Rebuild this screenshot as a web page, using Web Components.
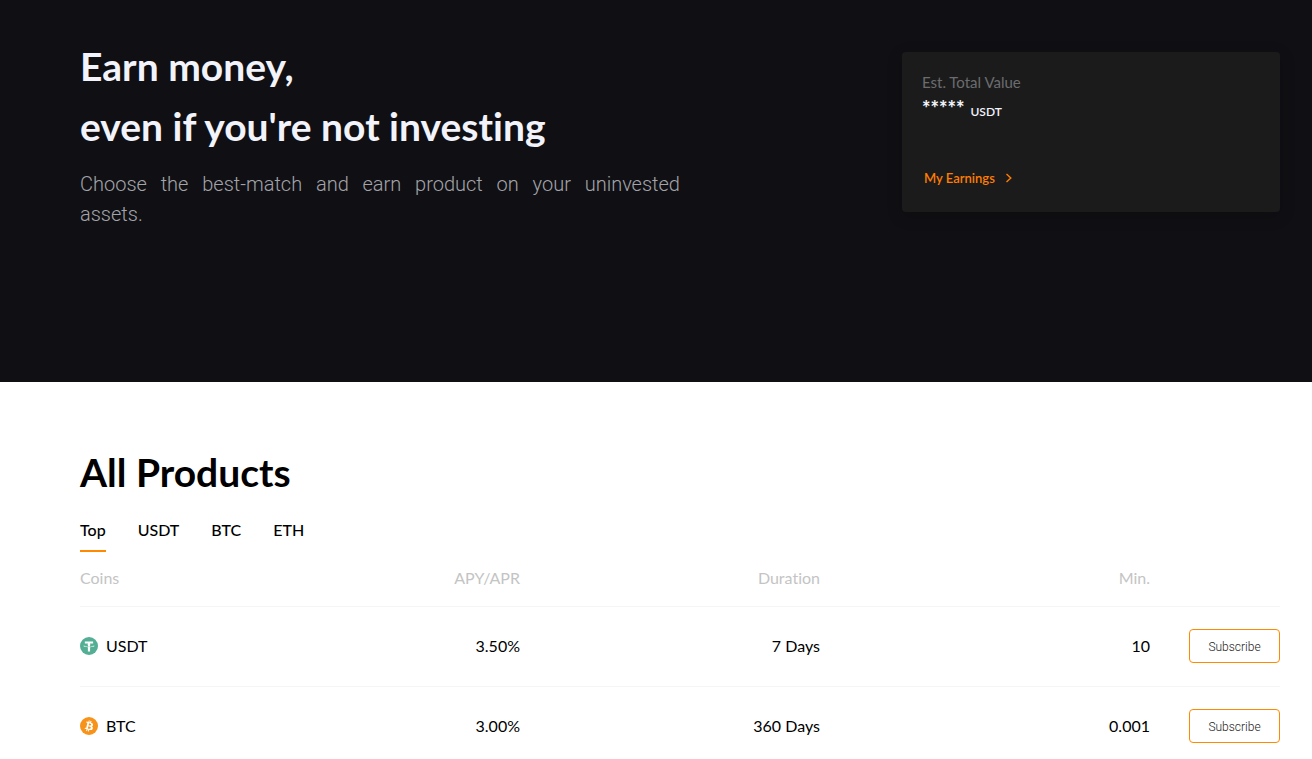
<!DOCTYPE html>
<html lang="en">
<head>
<meta charset="utf-8">
<title>Earn</title>
<style>
  body { margin: 0; background: #fff; color: #000; font: 400 16px/24px Lato, Roboto, sans-serif; font-variant-ligatures: none; }
</style>
</head>
<body>
<earn-hero>
  <span slot="title">Earn money,<br>even if you're not investing</span>
  <span slot="lead">Choose the best-match and earn product on your uninvested</span>
  <span slot="rest">assets.</span>
  <total-value-card slot="card" amount="*****" unit="USDT"></total-value-card>
</earn-hero>
<product-section>
  <span slot="title">All Products</span>
  <product-tabs slot="tabs" items="Top,USDT,BTC,ETH"></product-tabs>
  <product-table slot="table"></product-table>
</product-section>

<script>
class Base extends HTMLElement {
  connectedCallback() {
    if (!this.shadowRoot) this.attachShadow({ mode: 'open' }).innerHTML = this.render();
    this.ready();
  }
  ready() {}
}

customElements.define('earn-hero', class extends Base {
  render() {
    return `<style>
      :host { display: block; background: #101014; color: #f2f3fb; }
      header { display: flex; justify-content: space-between; align-items: flex-start; gap: 32px; min-height: 346px; padding: 36px 32px 0 80px; }
      .copy { flex: 0 1 600px; }
      h1 { margin: 0; font-size: 39px; line-height: 60px; font-weight: 700; }
      p { margin: 13px 0 0; font: 300 20px/30px Roboto, sans-serif; color: #a3a4aa; }
      ::slotted([slot=lead]) { display: block; text-align: justify; text-align-last: justify; }
      slot[name=card] { display: block; flex: 0 1 378px; margin-top: 16px; }
    </style>
    <header>
      <div class="copy">
        <h1><slot name="title"></slot></h1>
        <p><slot name="lead"></slot> <slot name="rest"></slot></p>
      </div>
      <slot name="card"></slot>
    </header>`;
  }
});

customElements.define('total-value-card', class extends Base {
  render() {
    return `<style>
      :host { display: block; background: #1b1b1b; border-radius: 4px; box-shadow: 0 4px 16px rgba(0, 0, 0, .2); }
      section { display: flex; flex-direction: column; padding: 18px 20px 24px; }
      .label { font-size: 15px; line-height: 24px; color: #6b6c70; }
      .value { display: flex; align-items: baseline; gap: 6px; line-height: 28px; color: #f2f3fb; }
      .amount { font-size: 20px; font-weight: 900; }
      .unit { font-size: 12px; font-weight: 600; }
      a { display: flex; align-items: center; gap: 10px; align-self: flex-start; margin-top: 42px; padding: 0 2px; font-size: 13px; line-height: 20px; font-weight: 600; color: #ff7d00; text-decoration: none; }
      svg { display: block; }
    </style>
    <section>
      <span class="label">Est. Total Value</span>
      <span class="value"><span class="amount">${this.getAttribute('amount')}</span><span class="unit">${this.getAttribute('unit')}</span></span>
      <a href="#earnings">My Earnings
        <svg width="8" height="10" viewBox="0 0 8 10" fill="none" stroke="currentColor" stroke-width="1.4" aria-hidden="true"><path d="M1.5 1 5.8 5 1.5 9"/></svg>
      </a>
    </section>`;
  }
});

customElements.define('product-section', class extends Base {
  render() {
    return `<style>
      :host { display: block; padding: 60px 32px 0 80px; }
      h2 { margin: 0 0 16px; font-size: 39px; line-height: 60px; font-weight: 700; }
    </style>
    <h2><slot name="title"></slot></h2>
    <slot name="tabs"></slot>
    <slot name="table"></slot>`;
  }
});

customElements.define('product-tabs', class extends Base {
  render() {
    return `<style>
      :host { display: block; }
      div { display: flex; gap: 32px; }
      button { margin: 0; padding: 0 0 8px; border: 0; border-bottom: 2px solid transparent; background: none; font: inherit; font-variant-ligatures: none; font-weight: 500; color: #000; cursor: pointer; }
      button[aria-selected=true] { border-color: #ff8a00; }
    </style>
    <div role="tablist" aria-label="Coins">${this.getAttribute('items').split(',').map((t, i) =>
      `<button type="button" role="tab" aria-selected="${i === 0}">${t}</button>`).join('')}</div>`;
  }
  ready() {
    const tabs = [...this.shadowRoot.querySelectorAll('button')];
    tabs.forEach(b => b.onclick = () => tabs.forEach(x => x.setAttribute('aria-selected', x === b)));
  }
});

customElements.define('coin-icon', class extends Base {
  render() {
    const coins = {
      USDT: ['#53ae94', 'M17.922 17.383v-.002c-.11.008-.677.042-1.942.042-1.01 0-1.721-.03-1.971-.042v.003c-3.888-.171-6.79-.848-6.79-1.658 0-.809 2.902-1.486 6.79-1.66v2.644c.254.018.982.061 1.988.061 1.207 0 1.812-.05 1.925-.06v-2.643c3.88.173 6.775.85 6.775 1.658 0 .81-2.895 1.485-6.775 1.657m0-3.59v-2.366h5.414V7.819H8.595v3.608h5.414v2.365c-4.4.202-7.709 1.074-7.709 2.118 0 1.044 3.309 1.915 7.709 2.118v7.582h3.913v-7.584c4.393-.202 7.694-1.073 7.694-2.116 0-1.043-3.301-1.914-7.694-2.117'],
      BTC: ['#f7931a', 'M23.189 14.02c.314-2.096-1.283-3.223-3.465-3.975l.708-2.84-1.728-.43-.69 2.765c-.454-.114-.92-.22-1.385-.326l.695-2.783L15.596 6l-.708 2.839c-.376-.086-.746-.17-1.104-.26l.002-.009-2.384-.595-.46 1.846s1.283.294 1.256.312c.7.175.826.638.805 1.006l-.806 3.235c.048.012.11.03.18.057l-.183-.045-1.13 4.532c-.086.212-.303.531-.793.41.018.025-1.256-.313-1.256-.313l-.858 1.978 2.25.561c.418.105.828.215 1.231.318l-.715 2.872 1.727.43.708-2.84c.472.127.93.245 1.378.357l-.706 2.828 1.728.43.715-2.866c2.948.558 5.164.333 6.097-2.333.752-2.146-.037-3.385-1.588-4.192 1.13-.26 1.98-1.003 2.207-2.538zm-3.95 5.538c-.533 2.147-4.148.986-5.32.695l.95-3.805c1.172.293 4.929.872 4.37 3.11zm.535-5.569c-.487 1.953-3.495.96-4.47.717l.86-3.45c.975.243 4.118.696 3.61 2.733z']
    };
    const [color, path] = coins[this.getAttribute('coin')];
    return `<style>:host { display: block; } svg { display: block; }</style>
    <svg width="18" height="18" viewBox="0 0 32 32" aria-hidden="true"><circle cx="16" cy="16" r="16" fill="${color}"/><path fill="#fff" d="${path}"/></svg>`;
  }
});

customElements.define('subscribe-button', class extends Base {
  render() {
    return `<style>
      :host { display: inline-block; vertical-align: middle; }
      button { display: block; width: 91px; height: 34px; margin: 0; padding: 2px 0 0; border: 1px solid #ff8a00; border-radius: 4px; background: #fff; font: 300 12px/20px Roboto, sans-serif; color: #222; cursor: pointer; }
    </style>
    <button type="button"><slot></slot></button>`;
  }
});

customElements.define('product-table', class extends Base {
  render() {
    const rows = [['USDT', '3.50%', '7 Days', '10'], ['BTC', '3.00%', '360 Days', '0.001']];
    return `<style>
      :host { display: block; }
      table { width: 100%; table-layout: fixed; border-collapse: separate; border-spacing: 0; }
      .half { width: 220px; } .term { width: 300px; } .min { width: 330px; } .act { width: 130px; }
      th, td { box-sizing: border-box; padding: 0 0 2px; text-align: right; font-weight: 400; border-bottom: 1px solid #f5f5f5; }
      thead :is(th, td) { height: 55px; color: #c4c4c4; }
      tbody td { height: 80px; }
      .name { text-align: left; }
      .coin { display: flex; align-items: center; gap: 8px; }
      tbody tr:last-child td { border-color: transparent; }
    </style>
    <table>
      <colgroup><col class="half"><col class="half"><col class="term"><col class="min"><col class="act"></colgroup>
      <thead><tr><th class="name" scope="col">Coins</th><th scope="col">APY/APR</th><th scope="col">Duration</th><th scope="col">Min.</th><td></td></tr></thead>
      <tbody>${rows.map(([c, a, d, m]) => `<tr>
        <td class="name"><div class="coin"><coin-icon coin="${c}"></coin-icon><span>${c}</span></div></td>
        <td>${a}</td><td>${d}</td><td>${m}</td><td><subscribe-button>Subscribe</subscribe-button></td></tr>`).join('')}</tbody>
    </table>`;
  }
});
</script>
</body>
</html>
